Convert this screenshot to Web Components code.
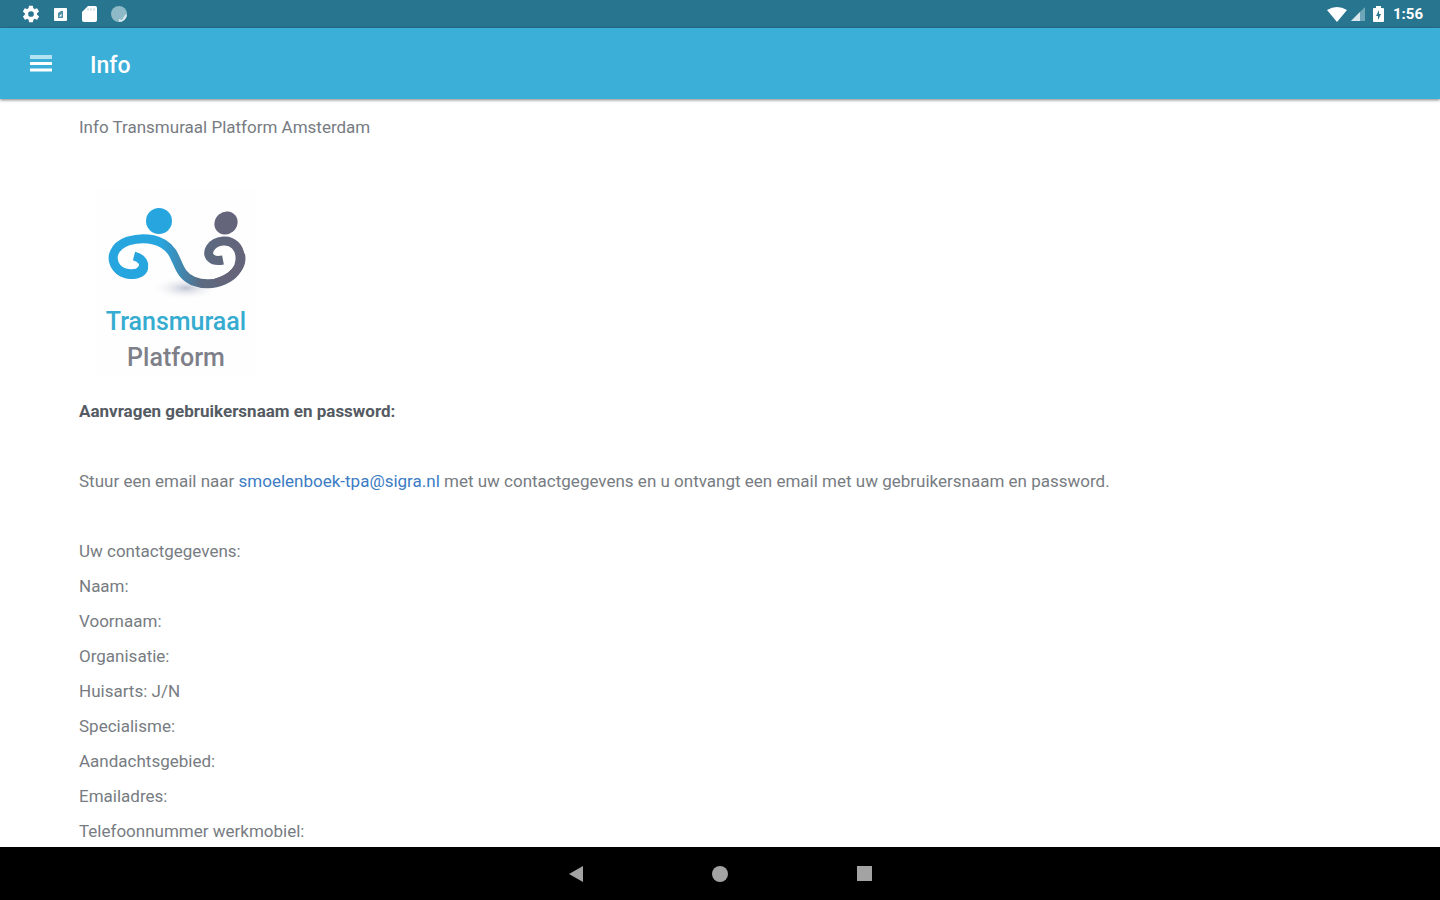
<!DOCTYPE html>
<html lang="nl">
<head>
<meta charset="utf-8">
<meta name="viewport" content="width=device-width, initial-scale=1">
<title>Info</title>
<style>
  body {
    margin: 0;
    font-family: Roboto, "Liberation Sans", sans-serif;
    --bar: #3bafd7;
    --bar-dark: #28758f;
    --text: #777c82;
    --heading: #555b63;
    --link: #3b7cc4;
  }
</style>
</head>
<body>
<info-app></info-app>

<script>
class StatusBar extends HTMLElement {
  static styles = `
    :host {
      display: flex;
      align-items: center;
      justify-content: space-between;
      height: 28px;
      padding: 0 17px 0 22px;
      background: var(--bar-dark);
      color: #fff;
      font-size: 15px;
      font-weight: 700;
      line-height: 28px;
    }
    div { display: flex; align-items: center; }
    .left { gap: 12px; }
    .right { gap: 2px; }
    svg { display: block; fill: #fff; }
    time { margin-left: 2px; }
  `;

  constructor() {
    super();
    this.attachShadow({ mode: "open" });
    this.shadowRoot.innerHTML = `
      <style>${StatusBar.styles}</style>
      <div class="left">
        <svg width="18" height="18" viewBox="1 1 22 22"><path d="M19.4 13a7.8 7.8 0 0 0 0-2l2.1-1.6a.5.5 0 0 0 .1-.7l-2-3.4a.5.5 0 0 0-.6-.2l-2.5 1a7.3 7.3 0 0 0-1.7-1l-.4-2.6a.5.5 0 0 0-.5-.5h-4a.5.5 0 0 0-.5.4L9 5.1a7.7 7.7 0 0 0-1.7 1l-2.5-1a.5.5 0 0 0-.6.2l-2 3.4a.5.5 0 0 0 .1.7L4.5 11a8 8 0 0 0 0 2l-2.1 1.6a.5.5 0 0 0-.1.7l2 3.4c.1.2.4.3.6.2l2.5-1c.5.4 1.1.7 1.7 1l.4 2.6c0 .3.2.5.5.5h4c.3 0 .5-.2.5-.4l.4-2.7a7.3 7.3 0 0 0 1.7-1l2.5 1c.2.1.5 0 .6-.2l2-3.4a.5.5 0 0 0-.1-.7zM12 15.5a3.5 3.5 0 1 1 0-7 3.5 3.5 0 0 1 0 7z"/></svg>
        <svg width="17" height="18" viewBox="0 0 17 18"><rect x="2" y="3" width="13" height="13" rx="1"/><path d="M6 13V8l3-2h2v7z" fill="#4f8fa5"/><path d="M7 11.5l2.5-3v3z"/></svg>
        <svg width="17" height="18" viewBox="0 0 17 18"><path d="M7 1h7a2 2 0 0 1 2 2v12a2 2 0 0 1-2 2H3a2 2 0 0 1-2-2V7z"/><path d="M7 3.5v2M10 3.5v2M13 3.5v2" stroke="#9dc3cf" stroke-width="1"/></svg>
        <svg width="18" height="18" viewBox="0 0 18 18"><circle cx="9" cy="9" r="8" fill="#8eb9c7"/><path d="M17 9a8 8 0 0 1-8 8v-3l3 1 3-5z" fill="#d8e8ed"/></svg>
      </div>
      <div class="right">
        <svg width="20" height="18" viewBox="0 0 20 18"><path d="M0 5Q10-1 20 5L10 17z"/></svg>
        <svg width="17" height="18" viewBox="0 0 17 18"><path d="M16 2v14H2z" fill="#6fa6b7"/><path d="M11 7v9H2z" fill="#d8e8ed"/></svg>
        <svg width="21" height="18" viewBox="0 0 21 18"><path d="M8 1h5v2h2a1 1 0 0 1 1 1v12a1 1 0 0 1-1 1H6a1 1 0 0 1-1-1V4a1 1 0 0 1 1-1h2z"/><path d="M11 5l-3 6h2v4l3-6h-2z" fill="#28758f"/></svg>
        <time>1:56</time>
      </div>
    `;
  }
}

class AppHeader extends HTMLElement {
  static styles = `
    :host {
      position: relative;
      display: flex;
      align-items: center;
      gap: 34px;
      height: 71px;
      padding: 0 26px;
      background: var(--bar);
      box-shadow: 0 1px 3px rgba(0,0,0,0.5);
      color: #fff;
    }
    button {
      all: unset;
      display: flex;
      padding: 4px;
      cursor: pointer;
    }
    h1 {
      margin: 0;
      padding-top: 4px;
      font-size: 23px;
      font-weight: 500;
      line-height: 28px;
    }
  `;

  constructor() {
    super();
    this.attachShadow({ mode: "open" });
    this.shadowRoot.innerHTML = `
      <style>${AppHeader.styles}</style>
      <button aria-label="Menu">
        <svg width="22" height="18" viewBox="0 0 22 18"><path d="M0 2h22" stroke="#b5e2f2" stroke-width="4"/><path d="M0 8.5h22M0 15h22" stroke="#fff" stroke-width="3"/></svg>
      </button>
      <h1><slot></slot></h1>
    `;
  }
}

class PlatformLogo extends HTMLElement {
  static styles = `
    :host { display: block; }
    svg { display: block; background: #fefefe; }
    text {
      font-family: Roboto, "Liberation Sans", sans-serif;
      font-size: 25px;
      font-weight: 500;
      text-anchor: middle;
    }
  `;

  constructor() {
    super();
    this.attachShadow({ mode: "open" });
    this.shadowRoot.innerHTML = `
      <style>${PlatformLogo.styles}</style>
      <svg width="160" height="190" viewBox="0 0 160 190">
        <defs>
          <linearGradient id="swirl" gradientUnits="userSpaceOnUse" x1="12" y1="0" x2="150" y2="0">
            <stop offset="0.38" stop-color="#27a5df"/>
            <stop offset="0.68" stop-color="#5c6a80"/>
            <stop offset="1" stop-color="#64647a"/>
          </linearGradient>
          <radialGradient id="shade">
            <stop offset="0" stop-color="#c0c4d4"/>
            <stop offset="1" stop-color="#fefefe" stop-opacity="0"/>
          </radialGradient>
        </defs>
        <ellipse cx="90" cy="101" rx="34" ry="12" fill="url(#shade)"/>
        <circle cx="63" cy="34" r="13" fill="#27a5df"/>
        <ellipse cx="130" cy="36" rx="12" ry="11" fill="#64647a" transform="rotate(-40 130 36)"/>
        <path d="M38 69C46 71 50 77 46 82C42 89 27 88 21 81C13 71 18 59 32 54C49 49 67 52 76 65C83 76 83 88 97 94C118 102 143 91 144 73C145 60 136 53 127 54C115 55 109 66 115 71C118 74 122 74 127 73" fill="none" stroke="url(#swirl)" stroke-width="9"/>
        <path d="M17 64C9 77 19 93 38 92C48 91 53 85 52 79L44 82C39 87 28 86 23 79z" fill="#27a5df"/>
        <path d="M141 61C145 76 134 88 118 92L121 97C140 94 152 82 149 67z" fill="#64647a"/>
        <text x="80" y="143" fill="#35acd0">Transmuraal</text>
        <text x="80" y="179" fill="#7e8089">Platform</text>
      </svg>
    `;
  }
}

class InfoContent extends HTMLElement {
  static styles = `
    :host {
      display: block;
      min-height: 0;
      overflow: hidden;
      padding: 11px 79px 0;
      background: #fff;
      color: var(--text);
      font-size: 17px;
      line-height: 35px;
    }
    p, h2, ul { margin: 0; padding: 0; }
    ul { list-style: none; }
    h2 {
      color: var(--heading);
      font-size: 17px;
      font-weight: 700;
      line-height: 35px;
    }
    platform-logo { margin: 42px 17px 17px; }
    .contact { margin: 35px 0; }
    a { color: var(--link); text-decoration: none; }
  `;

  fields = [
    "Uw contactgegevens:",
    "Naam:",
    "Voornaam:",
    "Organisatie:",
    "Huisarts: J/N",
    "Specialisme:",
    "Aandachtsgebied:",
    "Emailadres:",
    "Telefoonnummer werkmobiel:",
  ];

  constructor() {
    super();
    this.attachShadow({ mode: "open" });
    this.shadowRoot.innerHTML = `
      <style>${InfoContent.styles}</style>
      <p>Info Transmuraal Platform Amsterdam</p>
      <platform-logo></platform-logo>
      <h2>Aanvragen gebruikersnaam en password:</h2>
      <p class="contact">Stuur een email naar <a href="mailto:smoelenboek-tpa@sigra.nl">smoelenboek-tpa@sigra.nl</a> met uw contactgegevens en u ontvangt een email met uw gebruikersnaam en password.</p>
      <ul>${this.fields.map((field) => `<li>${field}</li>`).join("")}</ul>
    `;
  }
}

class NavigationBar extends HTMLElement {
  static styles = `
    :host {
      display: grid;
      grid-template-columns: repeat(3, 10%);
      justify-content: center;
      height: 53px;
      background: #000;
    }
    button {
      all: unset;
      display: flex;
      align-items: center;
      justify-content: center;
      cursor: pointer;
    }
    svg { fill: #a3a3a3; }
  `;

  constructor() {
    super();
    this.attachShadow({ mode: "open" });
    this.shadowRoot.innerHTML = `
      <style>${NavigationBar.styles}</style>
      <button aria-label="Terug"><svg width="16" height="16" viewBox="0 0 16 16"><path d="M1 8l14-8v16z"/></svg></button>
      <button aria-label="Start"><svg width="16" height="16" viewBox="0 0 16 16"><circle cx="8" cy="8" r="8"/></svg></button>
      <button aria-label="Overzicht"><svg width="16" height="16" viewBox="0 0 16 16"><rect x="1" y="0" width="15" height="15"/></svg></button>
    `;
  }
}

class InfoApp extends HTMLElement {
  static styles = `
    :host {
      display: grid;
      grid-template-rows: auto auto 1fr auto;
      height: 100vh;
    }
    app-header { z-index: 1; }
  `;

  constructor() {
    super();
    this.attachShadow({ mode: "open" });
    this.shadowRoot.innerHTML = `
      <style>${InfoApp.styles}</style>
      <status-bar></status-bar>
      <app-header>Info</app-header>
      <info-content></info-content>
      <navigation-bar></navigation-bar>
    `;
  }
}

customElements.define("status-bar", StatusBar);
customElements.define("app-header", AppHeader);
customElements.define("platform-logo", PlatformLogo);
customElements.define("info-content", InfoContent);
customElements.define("navigation-bar", NavigationBar);
customElements.define("info-app", InfoApp);
</script>
</body>
</html>
